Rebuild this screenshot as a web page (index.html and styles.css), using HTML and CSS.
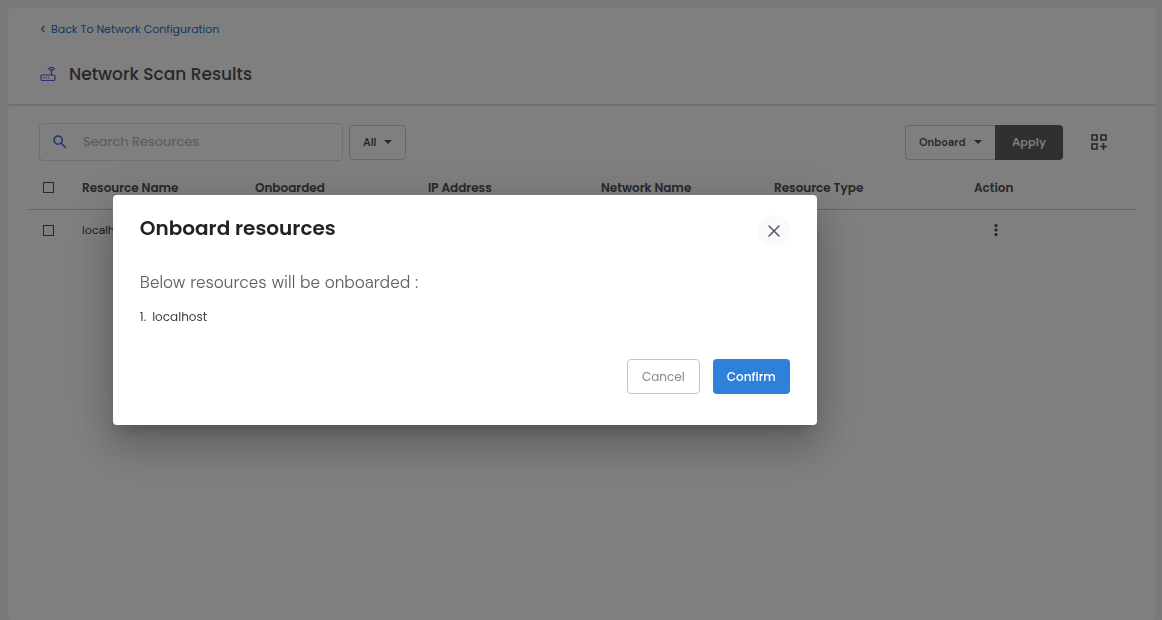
FILE: index.html
```html
<!DOCTYPE html>
<html lang="en">
<head>
    <meta charset="UTF-8">
    <meta name="viewport" content="width=device-width, initial-scale=1.0">
    <title>Network Scan Results</title>
    <link rel="stylesheet" href="styles.css">
</head>
<body>
    <main class="page">
        <header class="page-header">
            <a class="back-link" href="#">
                <svg width="6" height="8" viewBox="0 0 6 8" fill="none" stroke="currentColor" stroke-width="1.2"><path d="M4.5 1L1.5 4l3 3"/></svg>
                Back To Network Configuration
            </a>
            <div class="title-row">
                <svg class="router-icon" width="16" height="16" viewBox="0 0 16 16" fill="none" stroke="currentColor" stroke-width="1.2" stroke-linecap="round">
                    <rect x="1" y="9" width="14" height="5.5" rx="1.2"/>
                    <path d="M11.5 9V4.6M8.3 2.8q3.2-3 6.4 0M9.8 4.2q1.7-1.5 3.4 0M3.5 11.8h.4M6 11.8h.4M8.5 11.8h.4"/>
                </svg>
                <h1>Network Scan Results</h1>
            </div>
        </header>

        <section class="content">
            <div class="toolbar">
                <div class="search">
                    <svg width="18" height="18" viewBox="0 0 24 24" fill="currentColor"><path d="M15.5 14h-.79l-.28-.27A6.47 6.47 0 0 0 16 9.5 6.5 6.5 0 1 0 9.5 16c1.61 0 3.09-.59 4.23-1.57l.27.28v.79l5 4.99L20.49 19l-4.99-5zm-6 0C7.01 14 5 11.99 5 9.5S7.01 5 9.5 5 14 7.01 14 9.5 11.99 14 9.5 14z"/></svg>
                    <input type="text" placeholder="Search Resources" aria-label="Search Resources">
                </div>
                <div class="select-box filter">
                    <select aria-label="Filter">
                        <option>All</option>
                    </select>
                    <svg width="8" height="4" viewBox="0 0 8 4"><path d="M0 0h8L4 4z" fill="currentColor"/></svg>
                </div>
                <div class="bulk">
                    <div class="select-box">
                        <select aria-label="Bulk action">
                            <option>Onboard</option>
                        </select>
                        <svg width="8" height="4" viewBox="0 0 8 4"><path d="M0 0h8L4 4z" fill="currentColor"/></svg>
                    </div>
                    <button class="apply" type="button">Apply</button>
                </div>
                <button class="columns" type="button" aria-label="Customize columns">
                    <svg width="16" height="16" viewBox="0 0 16 16" fill="none" stroke="currentColor" stroke-width="1.6"><path d="M1 1h5v5H1zM10 1h5v5h-5zM1 10h5v5H1zM12.5 9v7M9 12.5h7"/></svg>
                </button>
            </div>

            <table>
                <thead>
                    <tr>
                        <th class="col-check"><input type="checkbox" aria-label="Select all"></th>
                        <th class="col-data">Resource Name</th>
                        <th class="col-data">Onboarded</th>
                        <th class="col-data">IP Address</th>
                        <th class="col-data">Network Name</th>
                        <th class="col-type">Resource Type</th>
                        <th>Action</th>
                    </tr>
                </thead>
                <tbody>
                    <tr>
                        <td><input type="checkbox" aria-label="Select localhost"></td>
                        <td>localhost</td>
                        <td></td>
                        <td></td>
                        <td></td>
                        <td></td>
                        <td>
                            <button class="more" type="button" aria-label="Row actions">
                                <svg width="4" height="12" viewBox="0 0 4 12" fill="currentColor"><circle cx="2" cy="1.6" r="1.5"/><circle cx="2" cy="6" r="1.5"/><circle cx="2" cy="10.4" r="1.5"/></svg>
                            </button>
                        </td>
                    </tr>
                </tbody>
            </table>
        </section>
    </main>

    <div class="backdrop"></div>
    <div class="modal" role="dialog" aria-modal="true" aria-labelledby="modalTitle">
        <div class="modal-header">
            <h2 id="modalTitle">Onboard resources</h2>
            <button class="close" type="button" aria-label="Close">
                <svg width="12" height="12" viewBox="0 0 12 12" fill="none" stroke="currentColor" stroke-width="1.5" stroke-linecap="round"><path d="M1 1l10 10M11 1L1 11"/></svg>
            </button>
        </div>
        <p class="modal-text">Below resources will be onboarded :</p>
        <ul class="resource-list">
            <li><span>1.</span><span>localhost</span></li>
        </ul>
        <div class="modal-actions">
            <button class="cancel" type="button">Cancel</button>
            <button class="confirm" type="button">Confirm</button>
        </div>
    </div>
</body>
</html>
```
FILE: styles.css
```css
* {
    box-sizing: border-box;
}
body {
    margin: 0;
    font-family: Poppins, Inter, sans-serif;
    font-size: 12px;
    color: #505050;
    background-color: #f3f3f3;
}
h1, h2, p, ul {
    margin: 0;
}
svg {
    display: block;
    flex: none;
}
button, select, input {
    font: inherit;
    color: inherit;
}
button {
    padding: 0;
    border: none;
    background: none;
    cursor: pointer;
}
.page {
    display: flex;
    flex-direction: column;
    min-height: 100vh;
    padding: 8px 6px 0 8px;
}
.page-header {
    padding: 12px 32px 18px;
    background-color: #fff;
    border-bottom: 1px solid #d8d8d8;
    border-radius: 4px 4px 0 0;
}
.back-link {
    display: inline-flex;
    align-items: center;
    gap: 5px;
    font-size: 11px;
    line-height: 18px;
    color: #2870c0;
    text-decoration: none;
}
.title-row {
    display: flex;
    align-items: center;
    gap: 13px;
    margin-top: 24px;
}
.router-icon {
    color: #5161e0;
}
h1 {
    font-size: 17px;
    line-height: 24px;
    font-weight: 500;
}
.content {
    flex: 1;
    margin-top: 2px;
    padding: 16px 20px;
    background-color: #fff;
    border-radius: 4px;
}
.toolbar {
    display: flex;
    align-items: center;
    padding: 0 29px 0 11px;
}
.search {
    display: flex;
    align-items: center;
    gap: 14px;
    flex: 0 1 304px;
    min-width: 0;
    height: 38px;
    padding: 0 11px;
    border: 1px solid #dedede;
    border-radius: 4px;
}
.search svg {
    color: #3b66e8;
}
.search input {
    flex: 1;
    width: 100%;
    min-width: 0;
    padding: 0;
    border: none;
    outline: none;
    background: none;
    font-size: 13px;
}
.search input::placeholder {
    color: #b4b4b4;
}
.select-box {
    display: flex;
    align-items: center;
    height: 35px;
    padding: 0 13px;
    border: 1px solid #d0d0d0;
    border-radius: 4px;
    font-family: "DM Sans", Poppins, sans-serif;
    font-size: 11px;
    font-weight: 600;
}
.select-box select {
    appearance: none;
    padding: 0;
    border: none;
    outline: none;
    background: none;
}
.select-box svg {
    margin-left: auto;
}
.filter {
    width: 57px;
    margin-left: 6px;
}
.bulk {
    display: flex;
    margin-left: auto;
}
.bulk .select-box {
    width: 90px;
    border-right: none;
    border-radius: 4px 0 0 4px;
}
.apply {
    width: 68px;
    height: 35px;
    border-radius: 0 4px 4px 0;
    background-color: #606060;
    color: #fff;
    font-family: "DM Sans", Poppins, sans-serif;
    font-weight: 600;
}
.columns {
    margin-left: 28px;
}
table {
    width: 100%;
    margin-top: 6px;
    border-collapse: collapse;
    table-layout: fixed;
}
th, td {
    height: 42px;
    padding: 0 14px;
    text-align: left;
    white-space: nowrap;
}
td {
    font-family: "DM Sans", Poppins, sans-serif;
    color: #404040;
}
thead tr {
    border-bottom: 1px solid #c8c8c8;
}
th {
    font-weight: 600;
}
.col-check {
    width: 40px;
}
.col-data {
    width: 173px;
}
.col-type {
    width: 200px;
}
input[type="checkbox"] {
    display: block;
    appearance: none;
    width: 11px;
    height: 11px;
    margin: 0 0 0 1px;
    border: 1px solid #505050;
}
.more {
    display: block;
    margin-left: 20px;
}
.backdrop {
    position: fixed;
    inset: 0;
    background-color: rgba(0, 0, 0, 0.5);
}
.modal {
    position: fixed;
    top: 50%;
    left: 40%;
    transform: translate(-50%, -50%);
    width: 704px;
    max-width: 80%;
    padding: 20px 27px 31px;
    border-radius: 4px;
    background-color: #fff;
    box-shadow: 0 11px 15px -7px rgba(0, 0, 0, 0.2), 0 24px 38px 3px rgba(0, 0, 0, 0.14), 0 9px 46px 8px rgba(0, 0, 0, 0.12);
}
.modal-header {
    display: flex;
    justify-content: space-between;
    align-items: flex-start;
}
h2 {
    font-size: 20px;
    line-height: 26px;
    font-weight: 600;
    color: #222;
}
.close {
    display: flex;
    align-items: center;
    justify-content: center;
    width: 32px;
    height: 32px;
    border-radius: 50%;
    background-color: #f9fafb;
    color: #54565f;
}
.modal-text {
    margin-top: 23px;
    font-family: "DM Sans", Poppins, sans-serif;
    font-size: 17px;
    line-height: 24px;
    font-weight: 300;
    color: #606060;
}
.resource-list {
    margin-top: 14px;
    padding: 0;
    list-style: none;
    line-height: 18px;
    color: #404040;
}
.resource-list li {
    display: flex;
    gap: 6px;
}
.modal-actions {
    display: flex;
    justify-content: flex-end;
    gap: 13px;
    margin-top: 33px;
}
.modal-actions button {
    height: 35px;
    border-radius: 4px;
}
.modal-actions .cancel {
    width: 73px;
    border: 1px solid #c4c4c4;
    color: #888;
}
.modal-actions .confirm {
    width: 77px;
    background-color: #2f80d8;
    color: #fff;
    font-weight: 500;
}
```
